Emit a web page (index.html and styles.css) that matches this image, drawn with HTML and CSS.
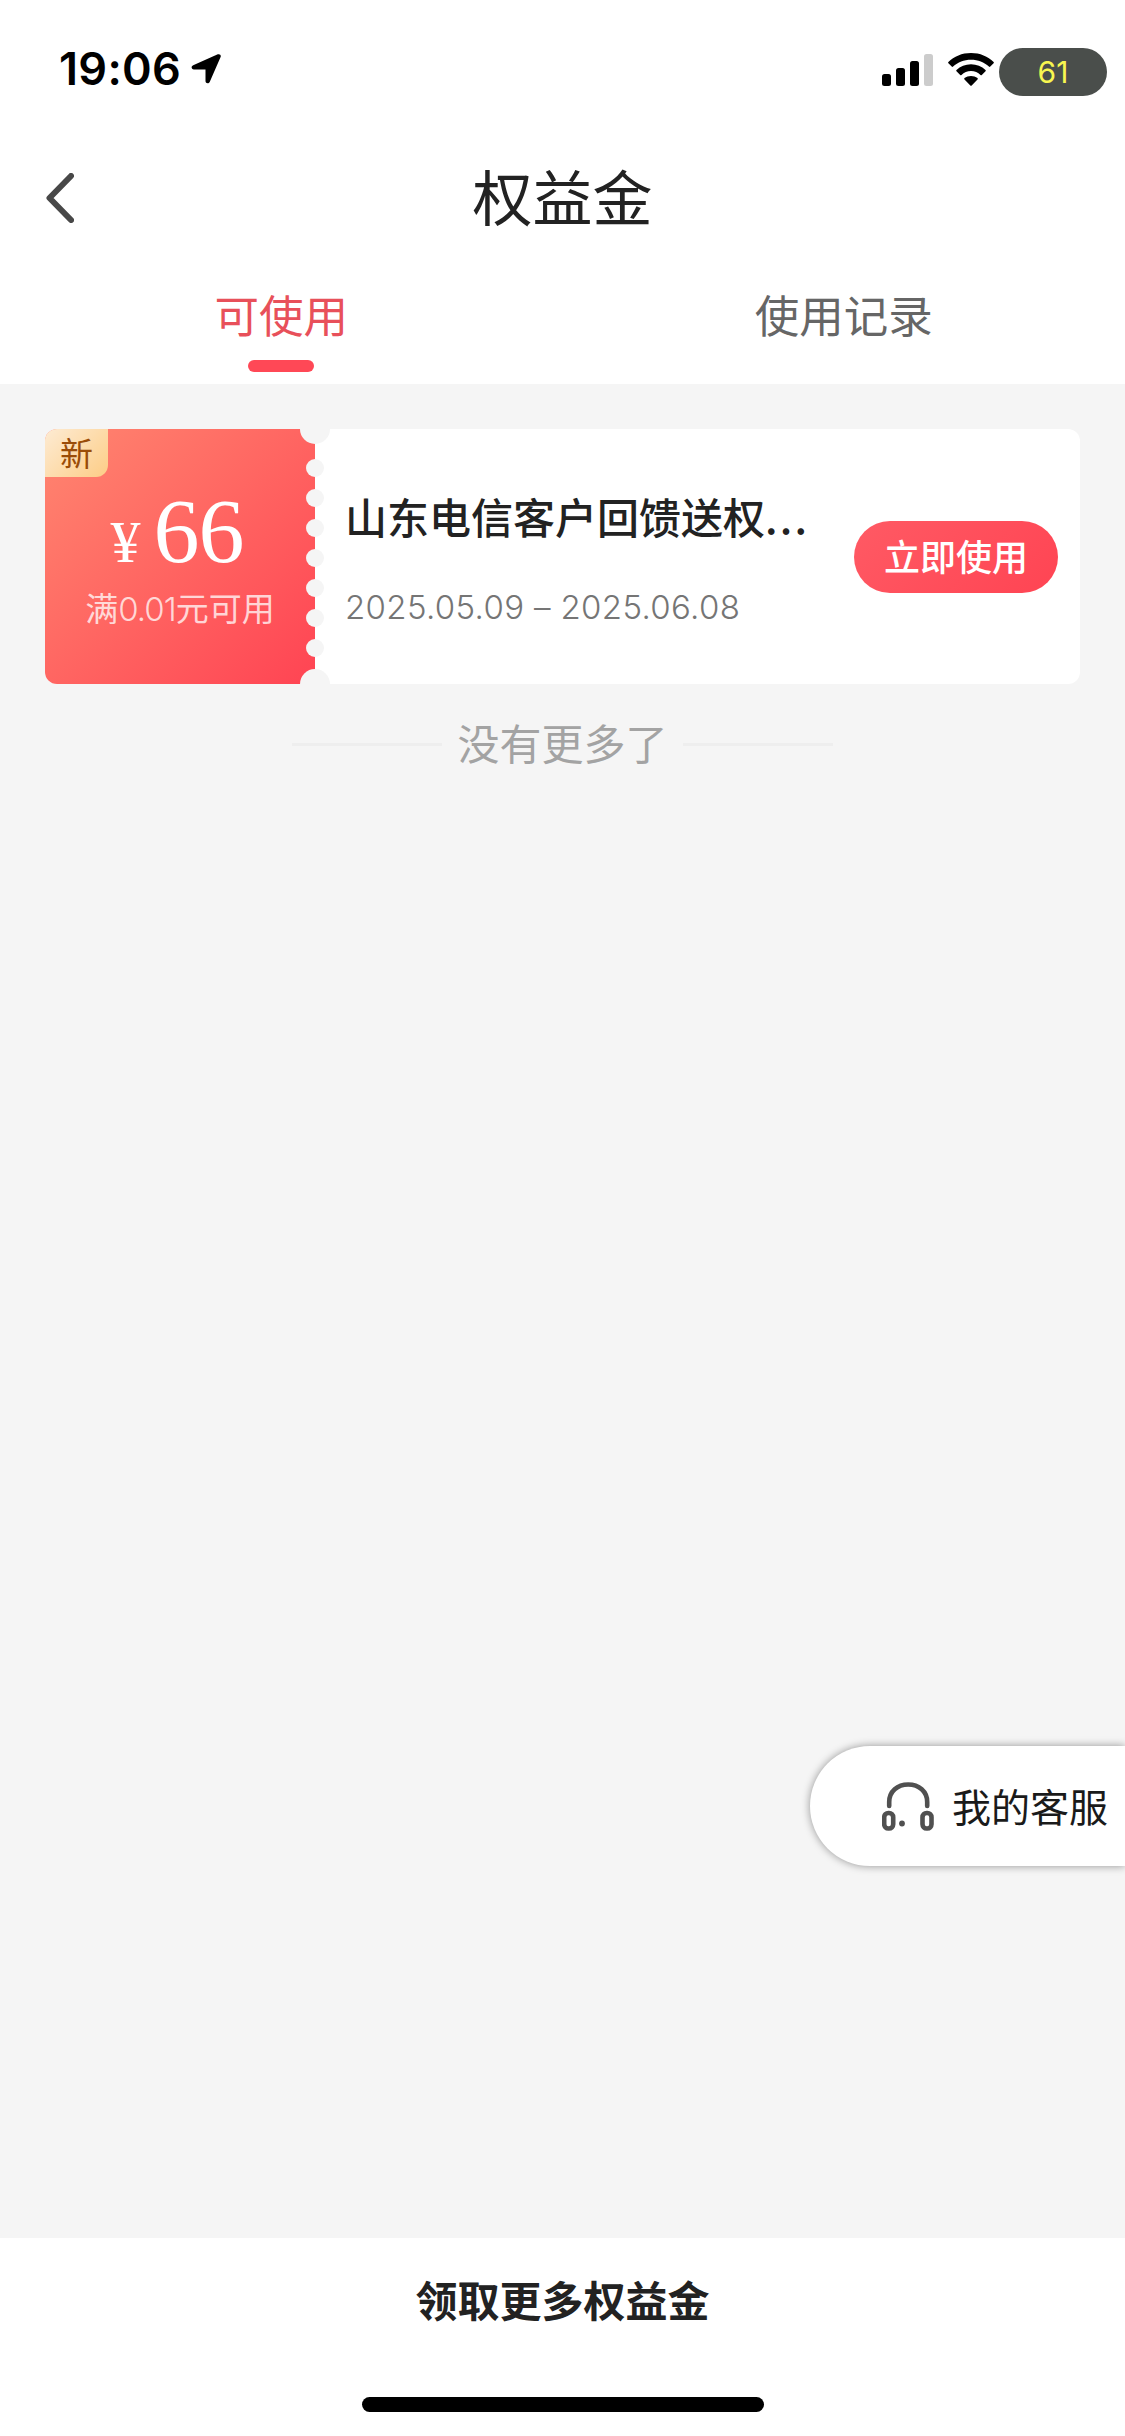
FILE: index.html
```html
<!DOCTYPE html>
<html lang="zh-CN">
<head>
  <meta charset="UTF-8">
  <meta name="viewport" content="width=device-width, initial-scale=1.0">
  <title>权益金</title>
  <link rel="stylesheet" href="styles.css">
</head>
<body>
  <div class="page">
    <header class="header">
      <div class="status">
        <span class="time">19:06</span>
        <svg class="locate" viewBox="0 0 30 30">
          <path d="M2.2 11.2 26.8 .3C28.8-.4 30.4 1.1 29.6 3.1L18.7 28C17.7 30.2 14.5 29.6 14.5 27.1V15.5H2.9C.3 15.5-.3 12.2 2.2 11.2Z"/>
        </svg>
        <svg class="signal" viewBox="0 0 51 33">
          <rect x="0" y="21" width="9" height="12" rx="2.5"/>
          <rect x="14" y="15" width="9" height="18" rx="2.5"/>
          <rect x="28" y="8" width="9" height="25" rx="2.5"/>
          <rect class="off" x="42" y="1" width="9" height="32" rx="2.5"/>
        </svg>
        <svg class="wifi" viewBox="0 0 46 33">
          <path d="M23 0C32 0 40 3.400 45.600 8.900Q46.200 9.600 45.600 10.300L42.300 13.600Q41.600 14.200 40.900 13.600C36.200 9.300 30 6.700 23 6.700S9.800 9.300 5.100 13.600Q4.400 14.200 3.700 13.600L.4 10.300Q-.2 9.600 .4 8.900C6 3.400 14 0 23 0Z"/>
          <path d="M23 11.300C28.600 11.300 33.700 13.400 37.500 16.900Q38.200 17.600 37.500 18.300L33.800 21.900Q33.200 22.500 32.500 21.900C30 19.500 26.700 18 23 18S16 19.500 13.500 21.900Q12.800 22.500 12.200 21.900L8.500 18.300Q7.800 17.600 8.500 16.900C12.300 13.400 17.400 11.300 23 11.300Z"/>
          <path d="M23 22.900C25.500 22.900 27.700 23.700 29.500 25.100Q30.200 25.800 29.500 26.500L23.700 32.400Q23 33 22.300 32.400L16.500 26.500Q15.800 25.800 16.500 25.100C18.300 23.700 20.500 22.900 23 22.900Z"/>
        </svg>
        <span class="battery">61</span>
      </div>
      <div class="navbar">
        <svg class="back" viewBox="0 0 28 50">
          <path d="M25 3 3.500 25 25 47"/>
        </svg>
        <h1>权益金</h1>
      </div>
      <nav class="tabs">
        <a class="tab active">可使用</a>
        <a class="tab">使用记录</a>
      </nav>
    </header>

    <main class="content">
      <section class="coupon">
        <div class="coupon-left">
          <span class="badge">新</span>
          <div class="price"><span class="unit">¥</span><span class="num">66</span></div>
          <div class="limit">满<span class="digits">0.01</span>元可用</div>
        </div>
        <svg class="notches" viewBox="0 0 30 255">
          <circle cx="15" cy="0" r="15"/>
          <circle cx="15" cy="39" r="9"/>
          <circle cx="15" cy="69" r="9"/>
          <circle cx="15" cy="99" r="9"/>
          <circle cx="15" cy="129" r="9"/>
          <circle cx="15" cy="159" r="9"/>
          <circle cx="15" cy="189" r="9"/>
          <circle cx="15" cy="219" r="9"/>
          <circle cx="15" cy="255" r="15"/>
        </svg>
        <div class="coupon-info">
          <div class="name">山东电信客户回馈送权<span class="dots">...</span></div>
          <div class="date">2025.05.09 – 2025.06.08</div>
        </div>
        <a class="use">立即使用</a>
      </section>
      <div class="nomore"><span>没有更多了</span></div>
    </main>

    <a class="service">
      <svg class="headset" viewBox="0 0 52 49">
        <path d="M7.200 24V20C7.200 9.500 15.500 2.500 26.200 2.500S45.200 9.500 45.200 20V24"/>
        <rect x="2.200" y="31" width="9" height="15.500" rx="4.200"/>
        <rect x="40.500" y="31" width="9" height="15.500" rx="4.200"/>
        <circle cx="20" cy="41.500" r="2.900"/>
      </svg>
      <span>我的客服</span>
    </a>

    <footer class="footer">
      <a class="more">领取更多权益金</a>
      <div class="home-bar"></div>
    </footer>
  </div>
</body>
</html>
```
FILE: styles.css
```css
* {
  box-sizing: border-box;
}

body {
  margin: 0;
  background: #f5f5f5;
  font-family: "Noto Sans CJK SC", sans-serif;
  color: #222;
}

.page {
  position: relative;
  display: flex;
  flex-direction: column;
  height: 2436px;
  overflow: hidden;
}

/* header */
.header {
  height: 384px;
  background: #fff;
}

.status {
  display: flex;
  align-items: center;
  height: 138px;
  padding: 0 18px 0 59px;
}

.time {
  width: 132px;
  font: 600 45px/54px Inter, sans-serif;
  letter-spacing: 0.3px;
  color: #000;
}

.locate {
  width: 30px;
  height: 30px;
}

.signal {
  width: 51px;
  height: 33px;
  margin-left: auto;
}

.signal .off {
  fill: #ccc;
}

.wifi {
  width: 46px;
  height: 33px;
  margin: 0 5px 0 15px;
}

.battery {
  width: 108px;
  height: 48px;
  margin-top: 6px;
  border-radius: 24px;
  background: #4a4e4b;
  color: #f8f650;
  font: 400 30px/49px Inter, sans-serif;
  text-align: center;
}

.navbar {
  display: flex;
  align-items: center;
  height: 120px;
  padding: 0 46px;
}

.back {
  width: 28px;
  height: 50px;
  fill: none;
  stroke: #484848;
  stroke-width: 6;
  stroke-linecap: round;
  stroke-linejoin: round;
}

.navbar h1 {
  flex: 1;
  margin: 0 28px 6px 0;
  font-size: 60px;
  font-weight: 400;
  line-height: 90px;
  text-align: center;
}

.tabs {
  display: flex;
  height: 126px;
}

.tab {
  flex: 1;
  display: flex;
  flex-direction: column;
  align-items: center;
  padding-top: 22px;
  font-size: 44.5px;
  line-height: 68px;
  color: #666;
}

.tab.active {
  color: #e8505a;
}

.tab.active::after {
  content: "";
  width: 66px;
  height: 12px;
  margin-top: 12px;
  border-radius: 6px;
  background: #ff4856;
}

/* coupon */
.content {
  flex: 1;
  padding: 45px;
}

.coupon {
  position: relative;
  display: flex;
  align-items: center;
  height: 255px;
  padding-right: 22px;
  border-radius: 12px;
  background: #fff;
}

.coupon-left {
  position: relative;
  width: 270px;
  height: 255px;
  padding-top: 52px;
  border-radius: 12px 0 0 12px;
  background: linear-gradient(135deg, #ff8670, #ff4453);
  color: #fff;
}

.badge {
  position: absolute;
  left: 0;
  top: 0;
  width: 63px;
  height: 48px;
  border-radius: 12px 0 12px 0;
  background: linear-gradient(135deg, #fdebd3, #fdcd86);
  color: #9a4c08;
  font-size: 33px;
  line-height: 46px;
  text-align: center;
}

.price {
  display: flex;
  justify-content: center;
  align-items: baseline;
  gap: 13px;
  height: 101px;
  padding-right: 6px;
  font-family: "Liberation Serif", serif;
  line-height: 100px;
}

.unit {
  font-size: 60px;
}

.num {
  font-size: 92px;
  letter-spacing: -1px;
}

.limit {
  font-size: 33px;
  line-height: 50px;
  text-align: center;
  color: rgba(255, 255, 255, .75);
}

.digits {
  font-family: Inter, sans-serif;
  font-weight: 300;
  letter-spacing: -1px;
}

/* the perforated edge lies over both halves */
.notches {
  position: absolute;
  left: 255px;
  top: 0;
  width: 30px;
  height: 255px;
  fill: #f5f5f5;
}

.coupon-info {
  flex: 1;
  padding: 4px 0 0 30px;
  white-space: nowrap;
}

.name {
  font-size: 42px;
  font-weight: 500;
  line-height: 62px;
}

.dots {
  letter-spacing: 2.2px;
}

.date {
  margin-top: 35px;
  font: 300 33px/50px Inter, sans-serif;
  letter-spacing: 0.35px;
  color: #757575;
}

.use {
  width: 204px;
  height: 72px;
  border-radius: 36px;
  background: linear-gradient(135deg, #ff5a64, #ff4453);
  color: #fff;
  font-size: 36px;
  font-weight: 500;
  line-height: 69px;
  text-align: center;
}

.nomore {
  display: flex;
  justify-content: center;
  align-items: center;
  gap: 15px;
  margin-top: 27px;
  font-size: 42px;
  line-height: 62px;
  color: #a3a3a3;
}

.nomore span {
  padding-bottom: 4px;
}

.nomore::before,
.nomore::after {
  content: "";
  width: 150px;
  height: 3px;
  background: #eee;
}

/* floating service button */
.service {
  position: absolute;
  right: 0;
  top: 1746px;
  display: flex;
  align-items: center;
  width: 315px;
  height: 120px;
  padding-left: 72px;
  border-radius: 60px 0 0 60px;
  background: #fff;
  box-shadow: 0 0 9px rgba(0, 0, 0, .4);
  color: #1a1a1a;
  font-size: 39px;
  white-space: nowrap;
}

.service span {
  padding-bottom: 3px;
}

.headset {
  width: 52px;
  height: 49px;
  margin-right: 18px;
  fill: none;
  stroke: #505050;
  stroke-width: 4.6;
  stroke-linecap: round;
}

.headset circle {
  fill: #505050;
  stroke: none;
}

/* footer */
.footer {
  display: flex;
  flex-direction: column;
  align-items: center;
  justify-content: space-between;
  height: 198px;
  padding: 30px 0 24px;
  background: #fff;
}

.more {
  font-size: 42px;
  font-weight: 700;
  line-height: 62px;
}

.home-bar {
  width: 402px;
  height: 15px;
  border-radius: 8px;
  background: #000;
}
```
